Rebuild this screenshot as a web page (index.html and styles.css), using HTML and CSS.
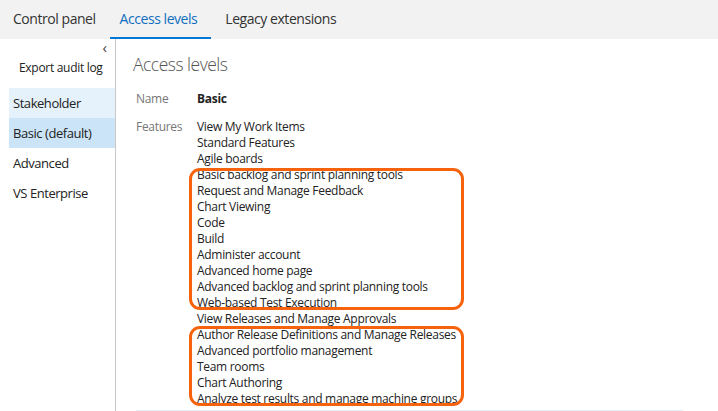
FILE: index.html
```html
<!DOCTYPE html>
<html>
<head>
<meta charset="utf-8">
<link rel="stylesheet" href="styles.css">
</head>
<body>
<div class="topbar">
  <div class="tab">Control panel</div>
  <div class="tab active">Access levels</div>
  <div class="tab">Legacy extensions</div>
</div>
<div class="body">
  <aside class="side">
    <div class="collapse">&lsaquo;</div>
    <div class="export">Export audit log</div>
    <ul class="nav">
      <li class="nav-item hover">Stakeholder</li>
      <li class="nav-item selected">Basic (default)</li>
      <li class="nav-item">Advanced</li>
      <li class="nav-item">VS Enterprise</li>
    </ul>
  </aside>
  <main class="main">
    <h1 class="title">Access levels</h1>
    <div class="props">
      <div class="label">Name</div>
      <div class="value strong">Basic</div>
      <div class="label features-label">Features</div>
      <div class="value features">
        <div>View My Work Items</div>
        <div>Standard Features</div>
        <div>Agile boards</div>
        <div class="group g1">
          <div>Basic backlog and sprint planning tools</div>
          <div>Request and Manage Feedback</div>
          <div>Chart Viewing</div>
          <div>Code</div>
          <div>Build</div>
          <div>Administer account</div>
          <div>Advanced home page</div>
          <div>Advanced backlog and sprint planning tools</div>
          <div>Web-based Test Execution</div>
        </div>
        <div>View Releases and Manage Approvals</div>
        <div class="group g2">
          <div>Author Release Definitions and Manage Releases</div>
          <div>Advanced portfolio management</div>
          <div>Team rooms</div>
          <div>Chart Authoring</div>
          <div>Analyze test results and manage machine groups</div>
        </div>
      </div>
    </div>
    <div class="footer-line"></div>
  </main>
</div>
</body>
</html>
```
FILE: styles.css
```css
html, body {
  margin: 0;
  padding: 0;
  background: #fff;
  font-family: "Segoe UI", "Open Sans", "Noto Sans", sans-serif;
  color: #222;
  overflow: hidden;
}

.topbar {
  display: flex;
  height: 39px;
  background: #f2f2f2;
  padding-left: 3px;
  gap: 4px;
}

.tab {
  padding: 0 10px;
  font-size: 14px;
  letter-spacing: -0.45px;
  line-height: 37px;
  color: #333;
  border-bottom: 2px solid transparent;
}

.tab.active {
  color: #106ebe;
  border-bottom-color: #0078d7;
  padding-right: 14px;
}

.body {
  display: flex;
  height: 372px;
}

.side {
  width: 106px;
  padding-left: 9px;
  border-right: 1px solid #c8c8c8;
  display: flex;
  flex-direction: column;
}

.collapse {
  text-align: right;
  padding-right: 8px;
  font-size: 15px;
  line-height: 16px;
  height: 16px;
  color: #444;
}

.export {
  font-size: 12px;
  letter-spacing: -0.3px;
  line-height: 16px;
  padding: 5px 0 12px 10px;
  color: #222;
}

.nav {
  list-style: none;
  margin: 0;
  padding: 0;
}

.nav-item {
  height: 30px;
  line-height: 30px;
  padding-left: 4px;
  font-size: 13px;
  letter-spacing: -0.45px;
  color: #222;
}

.nav-item.hover {
  background: #e5f1fb;
}

.nav-item.selected {
  background: #cce4f7;
}

.main {
  flex: 1;
  padding-left: 17px;
  display: flex;
  flex-direction: column;
}

.title {
  margin: 0;
  font-size: 17.5px;
  letter-spacing: -0.5px;
  font-weight: 300;
  color: #555;
  line-height: 24px;
  padding-top: 13px;
}

.props {
  display: grid;
  grid-template-columns: 61px auto;
  margin-left: 3px;
  padding-top: 15px;
  row-gap: 12px;
  font-size: 12px;
  letter-spacing: -0.3px;
  line-height: 16px;
}

.label {
  color: #777;
}

.value {
  color: #222;
}

.strong {
  font-weight: 700;
}

.group {
  position: relative;
}

.group::after {
  content: "";
  position: absolute;
  left: -8px;
  top: 1px;
  bottom: 1px;
  width: 275px;
  border: 3px solid #f7630c;
  border-radius: 11px;
  box-sizing: border-box;
}

.g2::after {
  top: -1px;
}

.footer-line {
  margin-top: 3px;
  margin-left: 3px;
  width: 547px;
  height: 2px;
  background: #e3f0fa;
}
```
